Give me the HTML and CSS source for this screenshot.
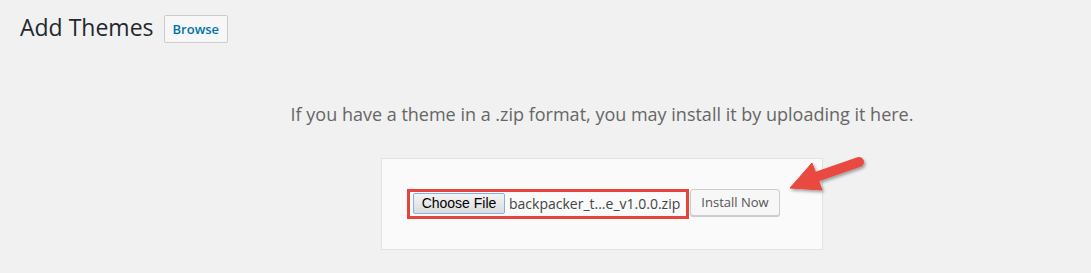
FILE: index.html
```html
<!DOCTYPE html>
<html lang="en">
<head>
<meta charset="utf-8">
<title>Add Themes</title>
<link rel="stylesheet" href="styles.css">
</head>
<body>
<div class="wrap">
  <div class="header">
    <h1 class="title">Add Themes</h1>
    <button class="browse">Browse</button>
  </div>
  <div class="upload">
    <p class="help">If you have a theme in a .zip format, you may install it by uploading it here.</p>
    <div class="form-box">
      <div class="row">
        <div class="highlight">
          <button class="choose">Choose File</button>
          <span class="filename">backpacker_t...e_v1.0.0.zip</span>
        </div>
        <button class="install">Install Now</button>
      </div>
    </div>
  </div>
</div>
<svg class="arrow" width="100" height="60" viewBox="0 0 100 60">
  <defs>
    <filter id="sh" x="-30%" y="-30%" width="160%" height="160%">
      <feDropShadow dx="1.5" dy="2" stdDeviation="1.6" flood-color="#000" flood-opacity="0.35"/>
    </filter>
  </defs>
  <g filter="url(#sh)" fill="#e8493f" stroke="#e8493f">
    <line x1="79" y1="17" x2="30" y2="34" stroke-width="10" stroke-linecap="round"/>
    <polygon points="10,43 32,18 42,45" stroke-width="1" stroke-linejoin="round"/>
  </g>
</svg>
</body>
</html>
```

FILE: styles.css
```css
html, body {
  margin: 0;
  padding: 0;
  background: #f1f1f1;
  font-family: "Open Sans", "Noto Sans", sans-serif;
}

.wrap {
  padding: 0 20px;
  position: relative;
}

.header {
  display: flex;
  align-items: flex-start;
  padding-top: 13px;
}

.title {
  margin: 0;
  font-size: 23px;
  font-weight: 400;
  line-height: 29px;
  color: #23282d;
}

.browse {
  margin: 2px 0 0 10px;
  height: 28px;
  padding: 0 8px;
  font-family: "Open Sans", sans-serif;
  font-size: 13px;
  font-weight: 600;
  color: #0073aa;
  background: #f7f7f7;
  border: 1px solid #ccc;
  border-radius: 2px;
  line-height: 26px;
}

.upload {
  width: 650px;
  margin-left: 257px;
  display: flex;
  flex-direction: column;
  align-items: center;
}

.help {
  margin: 58px 0 0;
  font-size: 18px;
  line-height: 27px;
  color: #666;
  text-align: center;
  white-space: nowrap;
}

.form-box {
  margin-top: 30px;
  width: 442px;
  height: 92px;
  box-sizing: border-box;
  background: #fafafa;
  border: 1px solid #e2e2e2;
  padding: 30px 25px;
}

.row {
  display: flex;
  align-items: flex-start;
}

.highlight {
  display: flex;
  align-items: flex-start;
  width: 282px;
  height: 30px;
  box-sizing: border-box;
  border: 3px solid #e5443d;
  padding: 1px 0 0 3px;
}

.choose {
  width: 92px;
  height: 21px;
  padding: 0;
  font-family: "Liberation Sans", Arial, sans-serif;
  font-size: 14px;
  color: #000;
  background: linear-gradient(#f4f4f4, #dcdcdc);
  border: 1px solid #7eb4ea;
  border-radius: 2px;
  line-height: 19px;
}

.filename {
  margin-left: 4px;
  font-size: 14px;
  line-height: 21px;
  color: #444;
  white-space: nowrap;
}

.install {
  margin-left: 1px;
  width: 90px;
  height: 27px;
  padding: 0;
  font-family: "Open Sans", sans-serif;
  font-size: 13px;
  color: #555;
  background: #f7f7f7;
  border: 1px solid #ccc;
  border-radius: 3px;
  box-shadow: 0 1px 0 #ccc;
  line-height: 25px;
}

.arrow {
  position: absolute;
  left: 780px;
  top: 145px;
}
```
